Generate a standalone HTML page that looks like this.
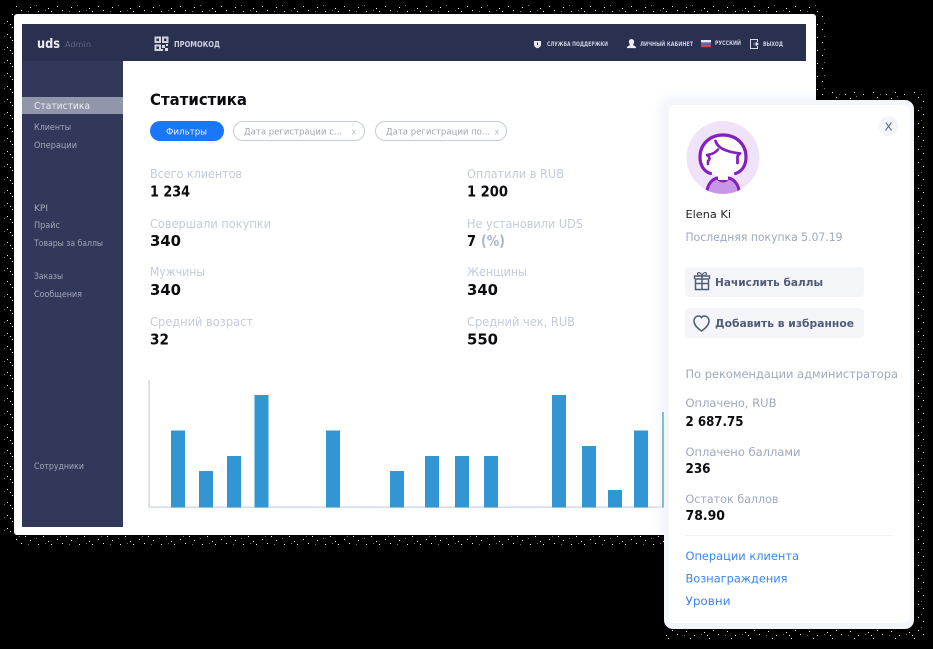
<!DOCTYPE html>
<html lang="ru"><head><meta charset="utf-8"><title>UDS Admin</title>
<style>
html,body{margin:0;padding:0;background:#000;width:933px;height:649px;overflow:hidden}
svg{display:block}
text{font-family:"DejaVu Sans","Liberation Sans",sans-serif;filter:blur(.25px)}
.b{font-weight:700}
.sm{fill:#a3a7ba;font-size:8.5px}
.h{fill:#c9ccdb;font-size:6px;font-weight:700}
.l{fill:#c4cad9;font-size:12.5px}
.v{fill:#0c0c10;font-size:15.5px;font-weight:700}
.g{fill:#9ea8bd;font-size:11.5px}
.pv{fill:#0c0c10;font-size:13.5px;font-weight:700}
.a{fill:#3b86f3;font-size:11.5px}
.bar{fill:#3296d2}
</style></head><body>
<svg width="933" height="649" viewBox="0 0 933 649" xmlns="http://www.w3.org/2000/svg">
<defs>
<pattern id="n" width="41" height="13" patternUnits="userSpaceOnUse">
<g fill="#fff"><rect x="2" y="3" width="1" height="1"/><rect x="7" y="8" width="1" height="1"/><rect x="12" y="1" width="1" height="1"/><rect x="16" y="6" width="1" height="1"/><rect x="21" y="10" width="1" height="1"/><rect x="25" y="3" width="1" height="1"/><rect x="30" y="7" width="1" height="1"/><rect x="34" y="1" width="1" height="1"/><rect x="38" y="11" width="1" height="1"/><rect x="10" y="11" width="1" height="1"/></g>
<g fill="#777"><rect x="4" y="10" width="1" height="1"/><rect x="19" y="3" width="1" height="1"/><rect x="28" y="11" width="1" height="1"/><rect x="36" y="5" width="1" height="1"/></g>
</pattern>
<clipPath id="av"><circle cx="723" cy="157.500" r="36.500"/></clipPath>
<clipPath id="pc"><rect x="14" y="14" width="802" height="521"/></clipPath>
<filter id="sh" x="-10%" y="-10%" width="120%" height="120%"><feGaussianBlur stdDeviation="5"/></filter>
</defs>

<rect width="933" height="649" fill="#000"/>
<!-- speckle noise around the cards -->
<rect x="14" y="4" width="808" height="10" fill="url(#n)"/>
<rect x="3" y="14" width="11" height="520" fill="url(#n)"/>
<rect x="14" y="536" width="650" height="10" fill="url(#n)"/>
<rect x="817" y="14" width="9" height="78" fill="url(#n)"/>
<rect x="817" y="91" width="105" height="8" fill="url(#n)"/>
<rect x="915" y="100" width="10" height="530" fill="url(#n)"/>
<rect x="664" y="630" width="262" height="10" fill="url(#n)"/>

<!-- main card -->
<rect x="14" y="14" width="802" height="521" rx="3" fill="#fff"/>
<rect x="22" y="24" width="784" height="37" fill="#2a3050"/>
<rect x="22" y="61" width="101" height="466" fill="#32385a"/>
<rect x="22" y="97" width="101" height="17" fill="#9196aa"/>

<!-- header -->
<text x="37" y="48" class="b" font-size="13" fill="#eceef4" textLength="23" lengthAdjust="spacingAndGlyphs">uds</text>
<text x="65" y="47" font-size="8" fill="#5f6582" textLength="26" lengthAdjust="spacingAndGlyphs">Admin</text>
<g fill="none" stroke="#cfd2dd" stroke-width="2">
<rect x="155.500" y="37.500" width="4.500" height="4.500"/><rect x="163" y="37.500" width="4.500" height="4.500"/><rect x="155.500" y="45.500" width="4.500" height="4.500"/>
</g>
<g fill="#d8dae3"><rect x="162" y="45" width="3" height="3"/><rect x="165" y="48" width="3" height="3"/><rect x="161" y="49" width="2" height="2"/><rect x="166" y="44" width="2" height="2"/></g>
<text x="174" y="47" class="b" font-size="7.500" fill="#cdd0de" textLength="46" lengthAdjust="spacingAndGlyphs">ПРОМОКОД</text>

<path d="M534 41h7v3.500c0 2-1.500 3-3.500 3.800c-2-.8-3.500-1.800-3.500-3.800z" fill="#e6e8ef"/><rect x="537" y="42.500" width="1" height="2.500" fill="#2a3050"/>
<text x="547" y="46" class="h" textLength="61" lengthAdjust="spacingAndGlyphs">СЛУЖБА ПОДДЕРЖКИ</text>
<path d="M631.500 39a2.600 2.600 0 0 1 2.600 2.800c0 1.500-.8 2.400-1 3.200c.3.600 3 1 3 3.100h-9.200c0-2.100 2.700-2.500 3-3.100c-.2-.8-1-1.700-1-3.200a2.600 2.600 0 0 1 2.600-2.800z" fill="#eceef3"/>
<text x="640" y="46" class="h" textLength="53" lengthAdjust="spacingAndGlyphs">ЛИЧНЫЙ КАБИНЕТ</text>
<rect x="701" y="40" width="10" height="2.400" fill="#e6e8f2"/><rect x="701" y="42.400" width="10" height="2.400" fill="#5b6fb8"/><rect x="701" y="44.800" width="10" height="2.400" fill="#d0444f"/>
<text x="715" y="45" class="h" textLength="26" lengthAdjust="spacingAndGlyphs">РУССКИЙ</text>
<path d="M757.500 42v-2.500h-7v9h7V46" fill="none" stroke="#d8dae3" stroke-width="1"/><path d="M753 44h3v-1.800l2.500 1.800l-2.500 1.800V44" fill="#e6e8ef" stroke="#e6e8ef" stroke-width=".6"/>
<text x="763" y="46" class="h" textLength="20" lengthAdjust="spacingAndGlyphs">ВЫХОД</text>

<!-- sidebar -->
<text x="34" y="109" font-size="9.500" fill="#eceef3" textLength="56" lengthAdjust="spacingAndGlyphs">Статистика</text>
<text x="34" y="130" class="sm" textLength="37" lengthAdjust="spacingAndGlyphs">Клиенты</text>
<text x="34" y="148" class="sm" textLength="43" lengthAdjust="spacingAndGlyphs">Операции</text>
<text x="34" y="211" class="sm" textLength="14" lengthAdjust="spacingAndGlyphs">KPI</text>
<text x="34" y="228" class="sm" textLength="26" lengthAdjust="spacingAndGlyphs">Прайс</text>
<text x="34" y="246" class="sm" textLength="69" lengthAdjust="spacingAndGlyphs">Товары за баллы</text>
<text x="34" y="279" class="sm" textLength="29" lengthAdjust="spacingAndGlyphs">Заказы</text>
<text x="34" y="297" class="sm" textLength="48" lengthAdjust="spacingAndGlyphs">Сообщения</text>
<text x="34" y="469" class="sm" textLength="50" lengthAdjust="spacingAndGlyphs">Сотрудники</text>

<!-- content -->
<text x="150" y="105" class="b" font-size="16" fill="#0c0c10" textLength="97" lengthAdjust="spacingAndGlyphs">Статистика</text>
<rect x="150" y="121" width="74" height="20" rx="10" fill="#1a76fb"/>
<text x="166" y="134.500" font-size="8.500" fill="#f2f6ff" textLength="41" lengthAdjust="spacingAndGlyphs">Фильтры</text>
<rect x="233.500" y="121.500" width="131" height="19" rx="9.500" fill="#fff" stroke="#c4cadf"/>
<text x="244" y="134.500" font-size="8.500" fill="#9ea3b2" textLength="98" lengthAdjust="spacingAndGlyphs">Дата регистрации с...</text>
<text x="351.500" y="134.500" font-size="8" fill="#b4b9c8">x</text>
<rect x="375.500" y="121.500" width="131" height="19" rx="9.500" fill="#fff" stroke="#c4cadf"/>
<text x="386" y="134.500" font-size="8.500" fill="#9ea3b2" textLength="104" lengthAdjust="spacingAndGlyphs">Дата регистрации по...</text>
<text x="494.500" y="134.500" font-size="8" fill="#b4b9c8">x</text>

<text x="150" y="178" class="l" textLength="92" lengthAdjust="spacingAndGlyphs">Всего клиентов</text>
<text x="150" y="196.500" class="v" textLength="40" lengthAdjust="spacingAndGlyphs">1 234</text>
<text x="150" y="228" class="l" textLength="121" lengthAdjust="spacingAndGlyphs">Совершали покупки</text>
<text x="150" y="246" class="v" textLength="31" lengthAdjust="spacingAndGlyphs">340</text>
<text x="150" y="276" class="l" textLength="55" lengthAdjust="spacingAndGlyphs">Мужчины</text>
<text x="150" y="295" class="v" textLength="31" lengthAdjust="spacingAndGlyphs">340</text>
<text x="150" y="326" class="l" textLength="103" lengthAdjust="spacingAndGlyphs">Средний возраст</text>
<text x="150" y="344.500" class="v" textLength="19" lengthAdjust="spacingAndGlyphs">32</text>
<text x="467" y="178" class="l" textLength="97" lengthAdjust="spacingAndGlyphs">Оплатили в RUB</text>
<text x="467" y="196.500" class="v" textLength="41" lengthAdjust="spacingAndGlyphs">1 200</text>
<text x="467" y="228" class="l" textLength="116" lengthAdjust="spacingAndGlyphs">Не установили UDS</text>
<text x="467" y="246" class="v" textLength="9" lengthAdjust="spacingAndGlyphs">7</text>
<text x="481" y="246" class="v" style="fill:#aab6d0" textLength="24" lengthAdjust="spacingAndGlyphs">(%)</text>
<text x="467" y="276" class="l" textLength="60" lengthAdjust="spacingAndGlyphs">Женщины</text>
<text x="467" y="295" class="v" textLength="31" lengthAdjust="spacingAndGlyphs">340</text>
<text x="467" y="326" class="l" textLength="108" lengthAdjust="spacingAndGlyphs">Средний чек, RUB</text>
<text x="467" y="344.500" class="v" textLength="31" lengthAdjust="spacingAndGlyphs">550</text>

<!-- chart -->
<rect x="148.500" y="380" width="1.200" height="127.500" fill="#c8cfe2"/>
<rect x="148.500" y="506.500" width="520" height="1.200" fill="#c8cfe2"/>
<rect class="bar" x="171" y="430.500" width="14" height="77"/>
<rect class="bar" x="199" y="471" width="14" height="36.500"/>
<rect class="bar" x="227" y="456" width="14" height="51.500"/>
<rect class="bar" x="254.500" y="395" width="14" height="112.500"/>
<rect class="bar" x="326" y="430.500" width="14" height="77"/>
<rect class="bar" x="390" y="471" width="14" height="36.500"/>
<rect class="bar" x="425" y="456" width="14" height="51.500"/>
<rect class="bar" x="455" y="456" width="14" height="51.500"/>
<rect class="bar" x="484" y="456" width="14" height="51.500"/>
<rect class="bar" x="552" y="395" width="14" height="112.500"/>
<rect class="bar" x="582" y="446" width="14" height="61.500"/>
<rect class="bar" x="608" y="490" width="14" height="17.500"/>
<rect class="bar" x="634" y="430.500" width="14" height="77"/>
<rect class="bar" x="662" y="412" width="6" height="95.500"/>

<!-- popup -->
<g clip-path="url(#pc)"><rect x="660" y="97" width="258" height="535" rx="10" fill="#e6ecf7" filter="url(#sh)" opacity=".6"/></g>
<rect x="664" y="100" width="250" height="529" rx="9" fill="#f3f6fb"/>
<rect x="669" y="105" width="241" height="518" rx="6" fill="#fff"/>

<circle cx="888.500" cy="126" r="10" fill="#f3f5f8"/>
<text x="884.500" y="130.500" font-size="11" fill="#56627e" textLength="8" lengthAdjust="spacingAndGlyphs">X</text>

<!-- avatar -->
<circle cx="723" cy="157.500" r="36.500" fill="#f0e2f8"/>
<g clip-path="url(#av)">
<path d="M707 192c0-7 5-13 10.500-14c1.500 2 3.500 3 5.500 3s4-1 5.500-3c5.500 1 10.500 7 10.500 14v5h-32z" fill="#c896e6" stroke="#851fbe" stroke-width="3"/>
<!-- hair fill, no bottom edge -->
<path d="M723 135c13.500 0 23 9.500 23 22c0 8-3.500 14-10 16c-2.500 2-8 4-13 4s-10.500-2-13-4c-6.500-2-10-8-10-16c0-12.500 9.500-22 23-22z" fill="#fff"/>
<rect x="718" y="175" width="10" height="5" fill="#fff"/>
<!-- hair outline, open under the chin -->
<path d="M710.500 173.500c-6.500-2-10.500-8-10.500-16.500c0-12.500 9.500-22 23-22s23 9.500 23 22c0 8.500-4 14.500-10.500 16.500" fill="none" stroke="#851fbe" stroke-width="3.200" stroke-linecap="round"/>
<!-- fringe -->
<path d="M715.500 141c2 6.500 9 10.500 24.500 12.500c-1.500 1-2.500 2-2.500 3.500v6" fill="none" stroke="#851fbe" stroke-width="2.800" stroke-linecap="round" stroke-linejoin="round"/>
<path d="M718 149.500c-2 2.500-6 5-11 5.500c1.500 1 2.500 2.200 2.500 3.500c0 1-.6 1.800-1.500 2.500v3" fill="none" stroke="#851fbe" stroke-width="2.600" stroke-linecap="round" stroke-linejoin="round"/>
</g>

<text x="685.500" y="218" font-size="11" fill="#23232a" textLength="45.500" lengthAdjust="spacingAndGlyphs">Elena Ki</text>
<text x="685.500" y="241" class="g" textLength="157" lengthAdjust="spacingAndGlyphs">Последняя покупка 5.07.19</text>

<rect x="685" y="267" width="179" height="30" rx="4" fill="#f3f5f8"/>
<g fill="none" stroke="#515d79" stroke-width="1.500">
<rect x="695.500" y="279" width="13" height="10.500"/>
<path d="M694.500 279v-3h15v3M702 276v13.500M695.500 283.500h13"/>
<path d="M702 276c-2.500 0-4.500-.8-4.500-2.200c0-1.800 3.500-1.800 4.500 2.200c1-4 4.500-4 4.500-2.200c0 1.400-2 2.200-4.500 2.200z" stroke-width="1.200"/>
</g>
<text x="715" y="286" class="b" font-size="11" fill="#505c78" textLength="108" lengthAdjust="spacingAndGlyphs">Начислить баллы</text>

<rect x="685" y="308" width="179" height="30" rx="4" fill="#f3f5f8"/>
<path d="M701.500 331c-4-2.800-7.500-5.800-7.500-10c0-3 2.200-5 4.700-5c1.200 0 2.200.6 2.800 1.600c.6-1 1.600-1.600 2.800-1.600c2.500 0 4.700 2 4.700 5c0 4.200-3.500 7.200-7.500 10z" fill="none" stroke="#515d79" stroke-width="1.500"/>
<text x="715" y="327" class="b" font-size="11" fill="#505c78" textLength="139" lengthAdjust="spacingAndGlyphs">Добавить в избранное</text>

<text x="685.500" y="378" class="g" textLength="212.500" lengthAdjust="spacingAndGlyphs">По рекомендации администратора</text>
<text x="685.500" y="407" class="g" textLength="91" lengthAdjust="spacingAndGlyphs">Оплачено, RUB</text>
<text x="685.500" y="426" class="pv" textLength="58" lengthAdjust="spacingAndGlyphs">2 687.75</text>
<text x="685.500" y="456" class="g" textLength="115" lengthAdjust="spacingAndGlyphs">Оплачено баллами</text>
<text x="685.500" y="473" class="pv" textLength="25" lengthAdjust="spacingAndGlyphs">236</text>
<text x="685.500" y="503" class="g" textLength="93" lengthAdjust="spacingAndGlyphs">Остаток баллов</text>
<text x="685.500" y="520" class="pv" textLength="39.500" lengthAdjust="spacingAndGlyphs">78.90</text>
<rect x="685" y="535" width="208" height="1" fill="#f0f2f6"/>
<text x="685.500" y="560" class="a" textLength="113.500" lengthAdjust="spacingAndGlyphs">Операции клиента</text>
<text x="685.500" y="582.500" class="a" textLength="102" lengthAdjust="spacingAndGlyphs">Вознаграждения</text>
<text x="685.500" y="605" class="a" textLength="45" lengthAdjust="spacingAndGlyphs">Уровни</text>
</svg>
</body></html>
